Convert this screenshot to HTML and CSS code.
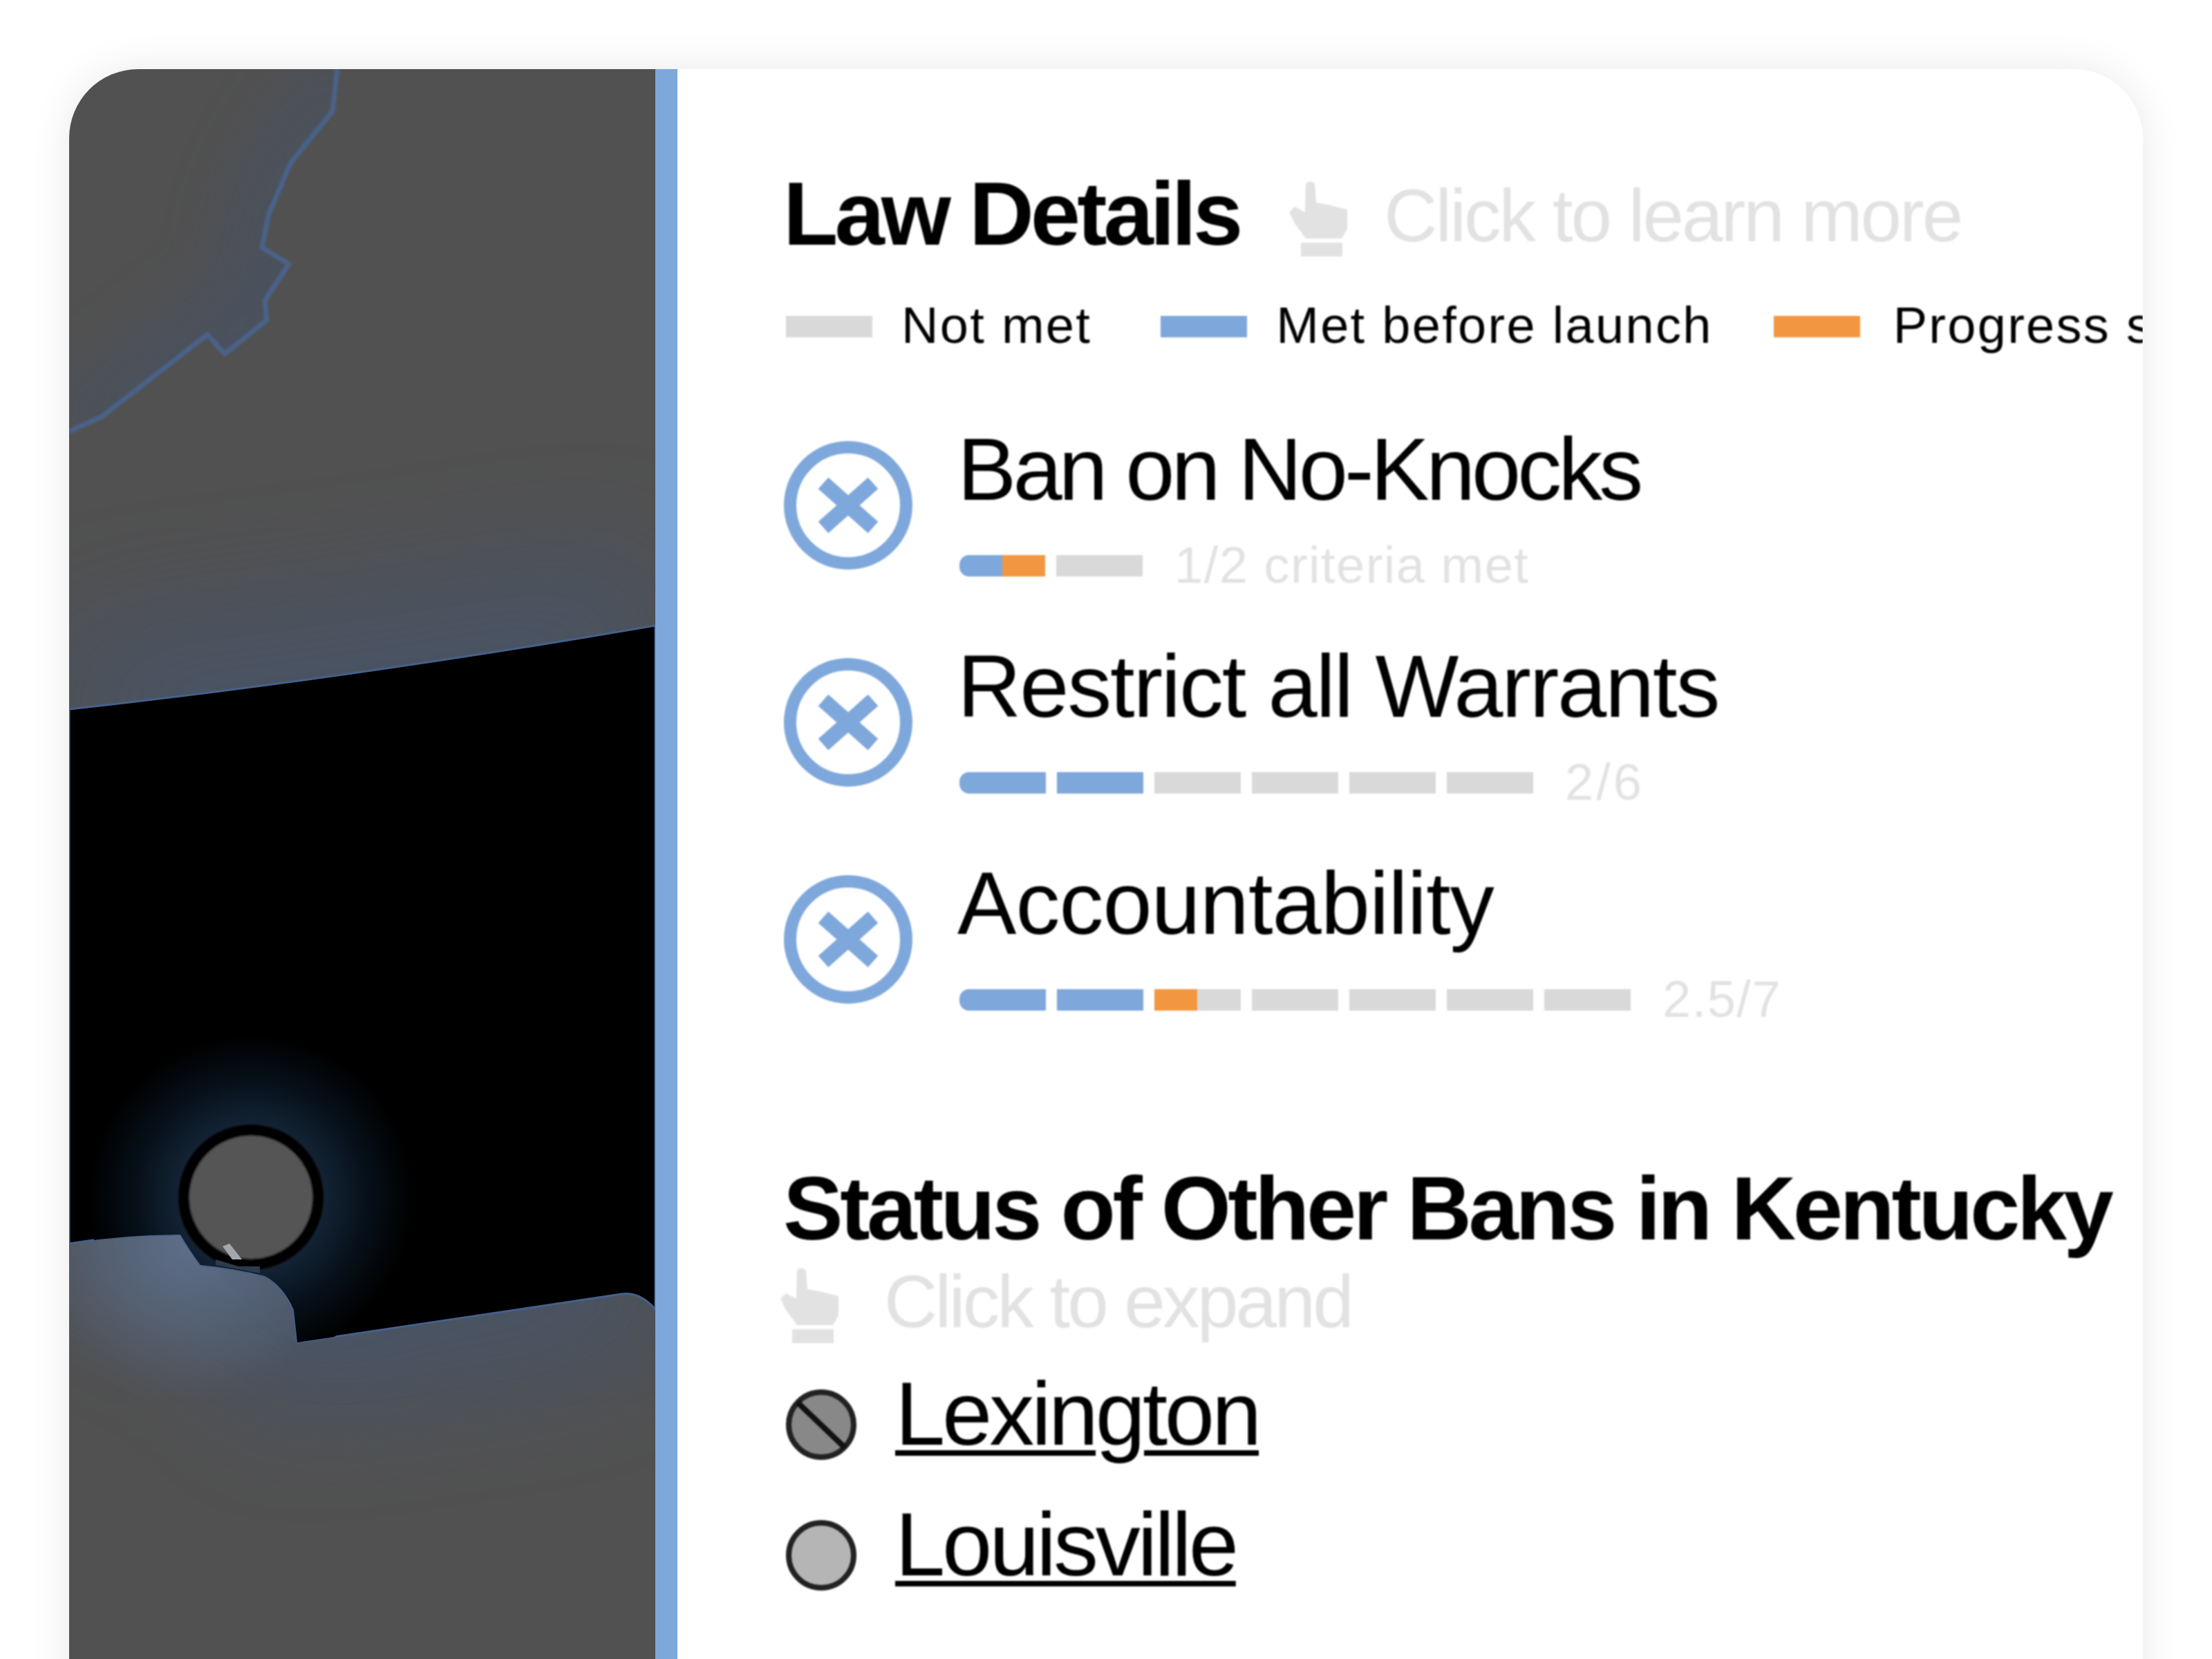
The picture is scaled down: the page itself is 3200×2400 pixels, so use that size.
FILE: index.html
```html
<!DOCTYPE html>
<html lang="en">
<head>
<meta charset="utf-8">
<title>Law Details</title>
<link rel="stylesheet" href="styles.css">
</head>
<body>
<main class="card">
  <section class="map" aria-label="Map of Kentucky">
    <svg class="map-svg" viewBox="100 100 848 2400" width="848" height="2400">
      <defs>
        <filter id="b60" filterUnits="userSpaceOnUse" x="-300" y="-300" width="1700" height="3200"><feGaussianBlur stdDeviation="90"/></filter>
        <filter id="b40" filterUnits="userSpaceOnUse" x="-300" y="-300" width="1700" height="3200"><feGaussianBlur stdDeviation="50"/></filter>
        <filter id="soft" filterUnits="userSpaceOnUse" x="0" y="0" width="1100" height="2500"><feGaussianBlur stdDeviation="1.5"/></filter>
        <clipPath id="state"><path d="M488 100L481 161L421 235L389 309L379 358L418 382L383 435L386 463L325 512L300 484L147 603L100 624V100Z"/></clipPath>
        <clipPath id="band"><path d="M100 1026Q500 982 948 905V1894Q925 1868 899 1872L430 1942L425 1895Q410 1860 383 1846Q340 1835 290 1830Q275 1810 261 1786Q180 1786 100 1799Z"/></clipPath>
        <clipPath id="land"><path d="M100 1799Q180 1786 261 1786Q275 1810 290 1830Q340 1835 383 1846Q410 1860 425 1895L430 1942L899 1872Q925 1868 948 1894V2400H100Z"/></clipPath>
        <clipPath id="north"><path d="M100 100H948V905Q500 982 100 1026Z"/></clipPath>
        <radialGradient id="halo"><stop offset="0.35" stop-color="#182a3e"/><stop offset="0.7" stop-color="#07111b"/><stop offset="1" stop-color="#000"/></radialGradient>
        <radialGradient id="landGlow"><stop offset="0" stop-color="#6d84a8" stop-opacity=".55"/><stop offset="1" stop-color="#6d84a8" stop-opacity="0"/></radialGradient>
      </defs>
      <rect x="100" y="100" width="848" height="2400" fill="#515151"/>
      <g clip-path="url(#state)">
        <path d="M488 100L481 161L421 235L389 309L379 358L418 382L383 435L386 463L325 512L300 484L147 603L100 624" fill="none" stroke="#3d5578" stroke-width="90" filter="url(#b40)" opacity=".4"/>
      </g>
      <path class="map-line" d="M488 100L481 161L421 235L389 309L379 358L418 382L383 435L386 463L325 512L300 484L147 603L100 624" filter="url(#soft)"/>
      <g clip-path="url(#north)">
        <path d="M100 1026Q500 982 948 905" fill="none" stroke="#3a5a8a" stroke-width="200" filter="url(#b60)" opacity=".38"/>
      </g>
      <g clip-path="url(#land)">
        <path d="M100 1799Q180 1786 261 1786Q275 1810 290 1830Q340 1835 383 1846Q410 1860 425 1895L430 1942L899 1872Q925 1868 948 1894" fill="none" stroke="#3a5a8a" stroke-width="160" filter="url(#b60)" opacity=".45"/>
        <circle cx="270" cy="1800" r="230" fill="url(#landGlow)"/>
      </g>
      <path d="M100 1026Q500 982 948 905V1894Q925 1868 899 1872L430 1942L425 1895Q410 1860 383 1846Q340 1835 290 1830Q275 1810 261 1786Q180 1786 100 1799Z" fill="#000" stroke="#45608a" stroke-width="3"/>
      <g clip-path="url(#band)">
        <circle cx="363" cy="1732" r="235" fill="url(#halo)"/>
      </g>
      <circle cx="363" cy="1732" r="97" fill="#555" stroke="#000" stroke-width="16" filter="url(#soft)"/>
      <path d="M312 1822L345 1832L376 1832L376 1842L312 1830Z" fill="#2f3a4a"/>
      <path d="M322 1803L332 1799L350 1822L336 1822Z" fill="#a3a8b0"/>
    </svg>
  </section>
  <section class="panel">
    <header class="title-row">
      <h2 class="title">Law Details</h2>
      <svg class="hand hand-top" viewBox="0 0 86 110"><path d="M24 5Q30-2 37 5L39 32L60 36L84 42V70L76 84H24L8 62L0 46L8 38L23 46ZM17 90H77V110H17Z"/></svg>
      <span class="hint">Click to learn more</span>
    </header>
    <ul class="legend">
      <li class="legend-item legend-not"><span class="swatch not"></span>Not met</li>
      <li class="legend-item legend-before"><span class="swatch met"></span>Met before launch</li>
      <li class="legend-item legend-progress"><span class="swatch swatch-last prog"></span>Progress since launch</li>
    </ul>
    <div class="law">
      <svg class="status" viewBox="0 0 188 188"><circle cx="94" cy="94" r="84" /><path d="M58 62L130 126M130 62L58 126"/></svg>
      <div class="law-body">
        <div class="law-name">Ban on No-Knocks</div>
        <div class="meter">
          <span class="seg met first half-w"></span><span class="seg prog half-w"></span><span class="seg not"></span>
          <span class="meter-label">1/2 criteria met</span>
        </div>
      </div>
    </div>
    <div class="law">
      <svg class="status" viewBox="0 0 188 188"><circle cx="94" cy="94" r="84" /><path d="M58 62L130 126M130 62L58 126"/></svg>
      <div class="law-body">
        <div class="law-name name-wide">Restrict all Warrants</div>
        <div class="meter">
          <span class="seg met first"></span><span class="seg met"></span><span class="seg not"></span><span class="seg not"></span><span class="seg not"></span><span class="seg not"></span>
          <span class="meter-label label-wide">2/6</span>
        </div>
      </div>
    </div>
    <div class="law">
      <svg class="status" viewBox="0 0 188 188"><circle cx="94" cy="94" r="84" /><path d="M58 62L130 126M130 62L58 126"/></svg>
      <div class="law-body">
        <div class="law-name name-wider">Accountability</div>
        <div class="meter">
          <span class="seg met first"></span><span class="seg met"></span><span class="seg split"></span><span class="seg not"></span><span class="seg not"></span><span class="seg not"></span><span class="seg not"></span>
          <span class="meter-label">2.5/7</span>
        </div>
      </div>
    </div>
    <h2 class="title title-status">Status of Other Bans in Kentucky</h2>
    <div class="expand-row">
      <svg class="hand" viewBox="0 0 86 110"><path d="M24 5Q30-2 37 5L39 32L60 36L84 42V70L76 84H24L8 62L0 46L8 38L23 46ZM17 90H77V110H17Z"/></svg>
      <span class="hint hint-tight">Click to expand</span>
    </div>
    <ul class="cities">
      <li class="city">
        <svg class="city-dot" viewBox="0 0 102 102"><circle class="dot-partial" cx="51" cy="51" r="47"/><path class="dot-bar" d="M17 19L85 84"/></svg>
        <a class="city-link" href="#">Lexington</a>
      </li>
      <li class="city">
        <svg class="city-dot" viewBox="0 0 102 102"><circle class="dot-plain" cx="51" cy="51" r="47"/></svg>
        <a class="city-link" href="#">Louisville</a>
      </li>
    </ul>
  </section>
</main>
</body>
</html>
```

FILE: styles.css
```css
html, body { margin: 0; padding: 0; height: 2400px; overflow: hidden; background: #fff; }
body { padding: 100px 0 0 100px; box-sizing: border-box; font-family: "Liberation Sans", Arial, sans-serif; color: #000; }
.card { width: 3000px; height: 2500px; display: flex; border-radius: 100px; overflow: hidden; background: #fff; box-shadow: 0 0 60px rgba(0,0,0,.09); }
.map { width: 848px; flex: none; border-right: 32px solid #7ea7db; }
.map-svg { display: block; }
.map-line { fill: none; stroke: #49628a; stroke-width: 7; }
.panel { flex: 1; min-width: 0; padding: 144px 0 0 153px; overflow: hidden; filter: blur(1.2px); }
.title-row { display: flex; align-items: flex-start; }
.title { margin: 0; font-size: 130px; line-height: 130px; font-weight: 700; letter-spacing: -5px; white-space: nowrap; }
.hand { width: 86px; height: 110px; fill: #e2e2e2; flex: none; }
.hand-top { margin: 17px 0 0 72px; }
.hint { font-size: 107px; line-height: 107px; color: #e2e2e2; letter-spacing: -3px; white-space: nowrap; }
.hint-tight { letter-spacing: -3.7px; }
.title-row .hint { margin: 15px 0 0 51px; }
.legend { list-style: none; margin: 60px 0 0 4px; padding: 0; display: flex; white-space: nowrap; }
.legend-item { display: flex; align-items: center; font-size: 74px; line-height: 74px; letter-spacing: 2.3px; }
.legend-not { margin-right: 100px; }
.legend-before { margin-right: 88px; }
.swatch { width: 125px; height: 31px; margin: 2px 42px 0 0; flex: none; }
.swatch-last { margin-right: 48px; }
.not { background: #d9d9d9; }
.met { background: #7ea7db; }
.prog { background: #f29740; }
.law { display: flex; margin-top: 74px; height: 240px; }
.legend + .law { margin-top: 107px; }
.status { width: 188px; height: 188px; margin: 22px 66px 0 0; flex: none; fill: none; stroke: #7ea7db; }
.status circle { stroke-width: 18; }
.status path { stroke-width: 22; }
.law-name { margin-left: -2px; font-size: 128px; line-height: 128px; letter-spacing: -5px; white-space: nowrap; }
.name-wide { letter-spacing: -2.2px; }
.name-wider { letter-spacing: -1px; }
.meter { display: flex; align-items: center; gap: 16px; height: 74px; margin: 38px 0 0 1px; }
.seg { width: 125px; height: 31px; }
.seg.first { border-radius: 14px 0 0 14px; }
.half-w { width: 62px; }
.half-w.first { margin-right: -16px; }
.split { background: linear-gradient(90deg, #f29740 50%, #d9d9d9 50%); }
.meter-label { margin-left: 30px; font-size: 74px; line-height: 74px; color: #e2e2e2; white-space: nowrap; letter-spacing: 1.5px; }
.label-wide { letter-spacing: 4px; }
.title-status { margin-top: 200px; letter-spacing: -4.55px; }
.expand-row { display: flex; align-items: flex-start; margin-top: 17px; }
.expand-row .hand { margin: 3px 64px 0 -4px; }
.cities { list-style: none; margin: 37px 0 0; padding: 0; }
.city { display: flex; align-items: flex-start; height: 130px; margin-bottom: 59px; }
.city-dot { width: 102px; height: 102px; margin: 30px 56px 0 4px; flex: none; }
.dot-partial, .dot-plain { stroke: #222; stroke-width: 8; }
.dot-partial { fill: #888; }
.dot-plain { fill: #b5b5b5; }
.dot-bar { stroke: #111; stroke-width: 8; fill: none; }
.city-link { font-size: 130px; line-height: 130px; color: #000; letter-spacing: -4.2px; text-decoration: underline; text-decoration-thickness: 8px; text-underline-offset: 8px; }
```
